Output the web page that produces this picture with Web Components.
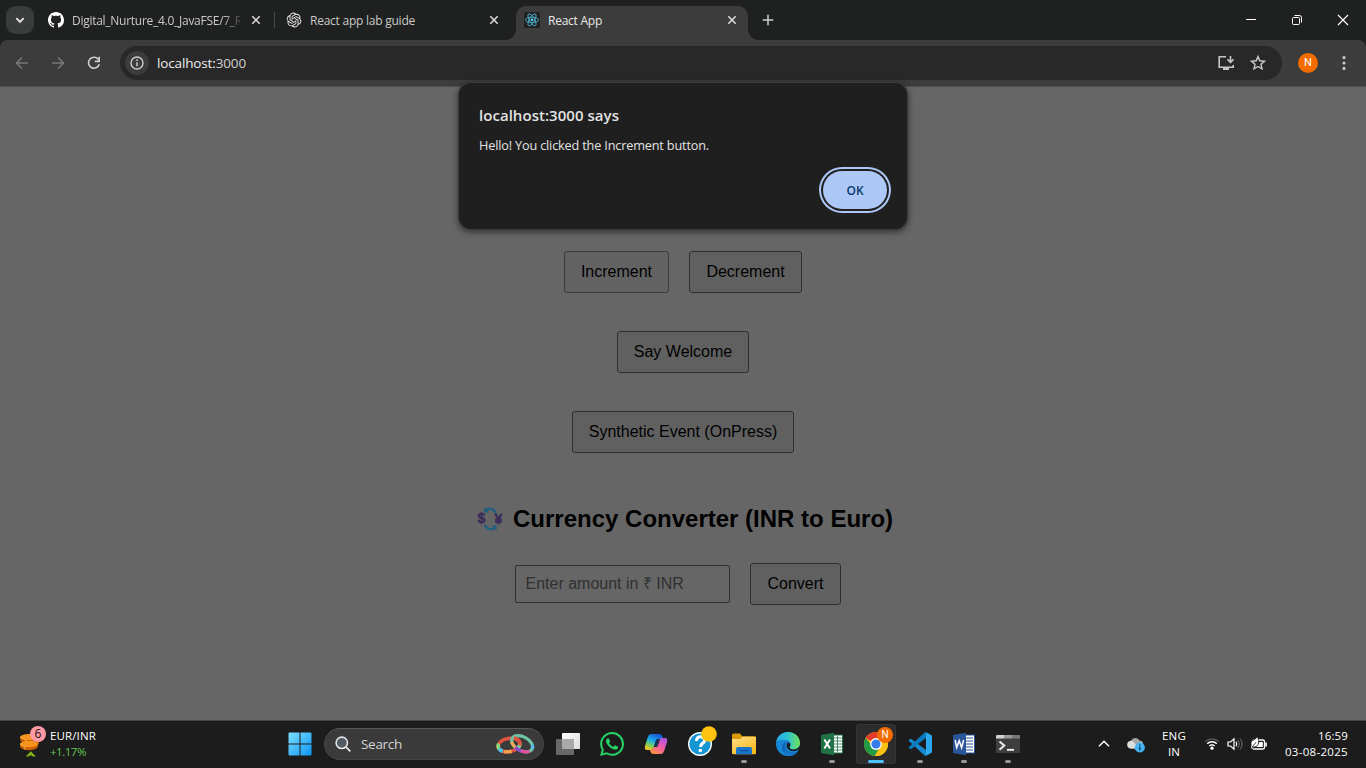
<!DOCTYPE html>
<html lang="en">
<head>
<meta charset="utf-8">
<title>React App</title>
<style>
html,body{margin:0;height:100%;overflow:hidden;background:#666}
body{font-family:"Open Sans","Noto Sans",sans-serif}
</style>
</head>
<body>
<desktop-screen></desktop-screen>
<script>
const ICONS = {
 chevronDown:['0 0 16 16','<path d="M4.3 6.2 8 9.9l3.7-3.7" fill="none" stroke="#e3e3e3" stroke-width="1.9"/>'],
 github:['0 0 16 16','<path fill="#fff" d="M8 0C3.58 0 0 3.58 0 8c0 3.54 2.29 6.53 5.47 7.59.4.07.55-.17.55-.38 0-.19-.01-.82-.01-1.49-2.01.37-2.53-.49-2.69-.94-.09-.23-.48-.94-.82-1.13-.28-.15-.68-.52-.01-.53.63-.01 1.08.58 1.23.82.72 1.21 1.87.87 2.33.66.07-.52.28-.87.51-1.07-1.78-.2-3.64-.89-3.64-3.95 0-.87.31-1.59.82-2.15-.08-.2-.36-1.02.08-2.12 0 0 .67-.21 2.2.82.64-.18 1.32-.27 2-.27s1.36.09 2 .27c1.53-1.04 2.2-.82 2.2-.82.44 1.1.16 1.92.08 2.12.51.56.82 1.27.82 2.15 0 3.07-1.87 3.75-3.65 3.95.29.25.54.73.54 1.48 0 1.07-.01 1.93-.01 2.2 0 .21.15.46.55.38A8.01 8.01 0 0 0 16 8c0-4.42-3.58-8-8-8z"/>'],
 openai:['-1 -1 26 26','<path fill="#f0f0f0" d="M22.28 9.82a5.98 5.98 0 0 0-.52-4.91 6.05 6.05 0 0 0-6.51-2.9A6.07 6.07 0 0 0 4.98 4.18a5.98 5.98 0 0 0-4 2.9 6.05 6.05 0 0 0 .74 7.1 5.98 5.98 0 0 0 .51 4.91 6.05 6.05 0 0 0 6.51 2.9A5.98 5.98 0 0 0 13.26 24a6.06 6.06 0 0 0 5.77-4.21 5.99 5.99 0 0 0 4-2.9 6.06 6.06 0 0 0-.75-7.07zm-9.02 12.61a4.48 4.48 0 0 1-2.88-1.04l.14-.08 4.78-2.76a.8.8 0 0 0 .39-.68v-6.74l2.02 1.17a.07.07 0 0 1 .04.05v5.58a4.5 4.5 0 0 1-4.49 4.5zM3.6 18.3a4.47 4.47 0 0 1-.54-3.01l.14.09 4.78 2.76a.77.77 0 0 0 .78 0l5.85-3.37v2.33a.08.08 0 0 1-.04.06L9.74 19.95A4.5 4.5 0 0 1 3.6 18.3zM2.34 7.9a4.49 4.49 0 0 1 2.37-1.98v5.68a.77.77 0 0 0 .38.68l5.82 3.35-2.02 1.17a.08.08 0 0 1-.07 0l-4.83-2.79A4.5 4.5 0 0 1 2.34 7.9zm16.6 3.85-5.84-3.39 2.02-1.16a.08.08 0 0 1 .07 0l4.83 2.79a4.49 4.49 0 0 1-.68 8.1v-5.67a.79.79 0 0 0-.4-.67zm2.01-3.02-.14-.09-4.78-2.78a.78.78 0 0 0-.78 0L9.41 9.23V6.9a.07.07 0 0 1 .03-.06l4.83-2.79a4.5 4.5 0 0 1 6.68 4.66zM8.31 12.86l-2.02-1.16a.08.08 0 0 1-.04-.06V6.07a4.5 4.5 0 0 1 7.38-3.45l-.15.08L8.7 5.46a.8.8 0 0 0-.39.68zm1.1-2.36 2.6-1.5 2.6 1.5v3l-2.6 1.5-2.6-1.5z"/>'],
 react:['0 0 16 16','<rect width="16" height="16" rx="1.5" fill="#202124"/><g fill="none" stroke="#4fb9d3" stroke-width=".85"><ellipse cx="8" cy="7.8" rx="6.7" ry="2.6"/><ellipse cx="8" cy="7.8" rx="6.7" ry="2.6" transform="rotate(60 8 7.8)"/><ellipse cx="8" cy="7.8" rx="6.7" ry="2.6" transform="rotate(120 8 7.8)"/></g><circle cx="8" cy="7.8" r="1.3" fill="#61dafb"/>'],
 close:['0 0 16 16','<path d="m4.3 4.3 7.4 7.4m0-7.4-7.4 7.4" stroke="#dcdcdc" stroke-width="1.55"/>'],
 plus:['0 0 16 16','<path d="M8 2.7v10.6M2.7 8h10.6" stroke="#d0d0d0" stroke-width="1.5"/>'],
 minimize:['0 0 16 16','<path d="M3 7.5h10" stroke="#fff"/>'],
 restore:['0 0 16 16','<g fill="none" stroke="#fff"><rect x="3.5" y="5.5" width="7" height="7" rx="1"/><path d="M5.5 3.5h5a2 2 0 0 1 2 2v5"/></g>'],
 winclose:['0 0 16 16','<path d="m3 3 10 10M13 3 3 13" stroke="#fff" stroke-width="1.2"/>'],
 back:['0 0 16 16','<path d="M14 8H2.8M8 2.5 2.5 8 8 13.5" fill="none" stroke="#787878" stroke-width="1.6"/>'],
 forward:['0 0 16 16','<path d="M2 8h11.2M8 2.5 13.5 8 8 13.5" fill="none" stroke="#787878" stroke-width="1.6"/>'],
 reload:['0 0 16 16','<path d="M12.6 4.7A5.5 5.5 0 1 0 13.3 9.3" fill="none" stroke="#d0d0d0" stroke-width="1.6"/><path d="M13.2 1.8v4.6H8.8" fill="none" stroke="#d0d0d0" stroke-width="1.6"/>'],
 info:['0 0 16 16','<circle cx="8" cy="8" r="6" fill="none" stroke="#ccc" stroke-width="1.4"/><path d="M8 7.2v4M8 4.3v1.6" stroke="#ccc" stroke-width="1.5"/>'],
 install:['0 0 18 18','<path d="M9 2.8H2.2v10.4h14V11" fill="none" stroke="#c7c7c7" stroke-width="1.6"/><path d="M6 13h6v3H6z" fill="#c7c7c7"/><path d="M13.5 2v6m-3-2.6 3 3 3-3" fill="none" stroke="#c7c7c7" stroke-width="1.6"/>'],
 star:['0 0 16 16','<path d="m8 1.6 1.8 4.2 4.7.4-3.5 3.1 1 4.6L8 11.5l-4 2.4 1-4.6-3.5-3.1 4.7-.4z" fill="none" stroke="#ccc" stroke-width="1.4"/>'],
 dots:['0 0 16 16','<g fill="#c7c7c7"><circle cx="8" cy="2.6" r="1.6"/><circle cx="8" cy="8" r="1.6"/><circle cx="8" cy="13.4" r="1.6"/></g>'],
 exchange:['0 0 25 25','<g fill="none" stroke="#1f5f80" stroke-width="2.6"><path d="M8 2.6c4-1.6 8-.3 9.8 3.4M16.6 21.4c-4 1.6-8 .3-9.8-3.4"/></g><path d="M6 .4v5.2h5.2zM18.6 23.6v-5.2h-5.2z" fill="#1f5f80"/><g fill="#3a2a58" font-family="Liberation Sans" font-size="14" stroke="#3a2a58" stroke-width=".5"><text x="-.6" y="16">$</text><text x="16.6" y="17">¥</text></g>'],
 coins:['0 0 28 32','<g fill="#c85f08"><ellipse cx="10" cy="11.5" rx="9" ry="4"/><ellipse cx="13" cy="15" rx="7" ry="3.5"/><ellipse cx="10" cy="18" rx="9" ry="4.3"/></g><g fill="#f6941e"><ellipse cx="10" cy="9" rx="9" ry="3"/><ellipse cx="10" cy="16" rx="9" ry="3.2"/></g><path d="m1 16 5 2.7v3M1 9l6 3v2" stroke="#ffb23c" fill="none"/><path d="m6.8 28.5 5-5.3 5 5.3h-3l-2-1.6-2 1.6z" fill="#83b818"/>'],
 windows:['0 0 24 24','<defs><linearGradient id="w" gradientUnits="userSpaceOnUse" x2="24" y2="24"><stop stop-color="#83e1ff"/><stop offset="1" stop-color="#0793f4"/></linearGradient></defs><path fill="url(#w)" d="M.5 1.5q0-1 1-1h10v11H.5zM12.5.5h10q1 0 1 1v10h-11zM.5 12.5h11v11h-10q-1 0-1-1zM12.5 12.5h11v10q0 1-1 1h-10z"/>'],
 search:['0 0 16 16','<circle cx="6.8" cy="6.8" r="5.7" fill="#525b64" stroke="#e5e5e5" stroke-width="1.6"/><path d="m10.9 10.9 4.4 4.4" stroke="#e5e5e5" stroke-width="1.8"/>'],
 rings:['0 0 38 22','<g fill="none" stroke-width="3.6"><g transform="rotate(-10 13 12)"><ellipse cx="13" cy="12" rx="11" ry="6.6" stroke="#e0523f"/><ellipse cx="13" cy="12" rx="11" ry="6.6" stroke="#f2a04b" pathLength="100" stroke-dasharray="14 86" stroke-dashoffset="-22"/><ellipse cx="13" cy="12" rx="11" ry="6.6" stroke="#3fc7e6" pathLength="100" stroke-dasharray="9 91" stroke-dashoffset="-38"/><ellipse cx="13" cy="12" rx="11" ry="6.6" stroke="#8fdc7c" pathLength="100" stroke-dasharray="9 91" stroke-dashoffset="-47"/><ellipse cx="13" cy="12" rx="11" ry="6.6" stroke="#75d69b" pathLength="100" stroke-dasharray="12 88"/></g><g transform="rotate(28 26 11)" stroke-width="3.2"><ellipse cx="26" cy="10.7" rx="11.3" ry="7" stroke="#6fc3a2"/><ellipse cx="26" cy="10.7" rx="11.3" ry="7" stroke="#e44fa4" pathLength="100" stroke-dasharray="15 85" stroke-dashoffset="-6"/><ellipse cx="26" cy="10.7" rx="11.3" ry="7" stroke="#9042ce" pathLength="100" stroke-dasharray="12 88" stroke-dashoffset="-21"/><ellipse cx="26" cy="10.7" rx="11.3" ry="7" stroke="#f0a850" pathLength="100" stroke-dasharray="11 89" stroke-dashoffset="-33"/><ellipse cx="26" cy="10.7" rx="11.3" ry="7" stroke="#57b8e8" pathLength="100" stroke-dasharray="8 92" stroke-dashoffset="-92"/></g><path d="M18 4.5q7 2 6 8" stroke="#e2503f" stroke-width="3"/></g>'],
 taskview:['0 0 24 24','<defs><linearGradient id="tv" x2="1" y2="1"><stop stop-color="#fff"/><stop offset="1" stop-color="#ddd"/></linearGradient></defs><rect x="6" y="1" width="18" height="16" rx=".7" fill="url(#tv)"/><rect y="7" width="18" height="16" rx=".7" fill="#686868"/><path d="M6 7h12v10H6z" fill="#aaa"/>'],
 whatsapp:['0 0 24 24','<path fill="#25d366" d="M17.47 14.38c-.3-.15-1.76-.87-2.03-.97-.27-.1-.47-.15-.67.15-.2.3-.77.97-.94 1.16-.17.2-.35.22-.64.08-.3-.15-1.26-.46-2.39-1.48-.88-.79-1.48-1.76-1.65-2.06-.17-.3-.02-.46.13-.61.13-.13.3-.35.44-.52.15-.17.2-.3.3-.5.1-.2.05-.37-.02-.52-.08-.15-.67-1.61-.92-2.21-.24-.58-.49-.5-.67-.51h-.57c-.2 0-.52.07-.79.37-.27.3-1.04 1.02-1.04 2.48s1.07 2.88 1.21 3.07c.15.2 2.1 3.2 5.08 4.49.71.31 1.26.49 1.69.62.71.23 1.36.2 1.87.12.57-.09 1.76-.72 2.01-1.41.25-.69.25-1.29.17-1.41-.07-.12-.27-.2-.57-.34M12.05 21.79a9.87 9.87 0 0 1-5.03-1.38l-.36-.21-3.74.98 1-3.65-.24-.37a9.86 9.86 0 0 1-1.51-5.26c0-5.45 4.44-9.89 9.89-9.89a9.88 9.88 0 0 1 9.88 9.9c0 5.45-4.44 9.88-9.89 9.88m8.42-18.3A11.82 11.82 0 0 0 12.05 0C5.5 0 .16 5.34.16 11.89c0 2.1.55 4.14 1.59 5.95L.06 24l6.31-1.65a11.88 11.88 0 0 0 5.68 1.45c6.56 0 11.9-5.34 11.9-11.9 0-3.17-1.24-6.16-3.48-8.41z"/>'],
 copilot:['0 0 24 24','<defs><linearGradient id="c1" x1=".7" x2=".2" y2="1"><stop stop-color="#1755d5"/><stop offset=".45" stop-color="#1aabe9"/><stop offset=".72" stop-color="#79ce5c"/><stop offset="1" stop-color="#ffc31b"/></linearGradient><linearGradient id="c2" x1=".8" x2=".2" y2="1"><stop stop-color="#a756e8"/><stop offset=".5" stop-color="#f65aa1"/><stop offset="1" stop-color="#ff963e"/></linearGradient></defs><path fill="url(#c1)" d="M7 2h8.5q2 0 2.7 2l.8 3H14q-1.5 0-2.2 2L10 15q-1 3-3.5 3H3.3Q0 18 1 14L3.8 5Q4.7 2 7 2z"/><path fill="url(#c2)" d="M17.5 6H21q3 0 2.1 4l-3 9q-1 3-3.6 3H10q-3 0-3.5-2.3L6 18q2.8 0 3.8-3H12q1.2 0 1.8-1.7L15.5 8q.6-2 2-2z"/><path fill="#1b3156" d="m10 15 1.8-6q.6-2 2.2-2h2l-2 6q-.7 2-2 2z"/>'],
 help:['0 0 30 30','<circle cx="12" cy="18" r="12" fill="#fff"/><circle cx="12" cy="18" r="10.6" fill="#1496d3"/><path d="M8.3 15q.4-4.2 4.2-4.2 4.1 0 4.1 3.3 0 2.1-2 3.3-2 1.2-2 3.5" fill="none" stroke="#fff" stroke-width="3"/><circle cx="12.3" cy="24.5" r="1.8" fill="#fff"/><circle cx="21" cy="8" r="7.8" fill="#ffc20e"/>'],
 folder:['0 0 24 24','<defs><linearGradient id="f" y2="1" x2=".7"><stop stop-color="#ffe08a"/><stop offset="1" stop-color="#f7b91d"/></linearGradient></defs><path d="M0 3q0-1.5 1.5-1.5H8l2.2 2.7H22q2 0 2 2V15H0z" fill="#d99b0b"/><path d="M0 7h8.5l2.2-2.3H24v16q0 1.5-1.5 1.5h-21Q0 22.2 0 20.7z" fill="url(#f)"/><path d="M4 22.2v-5Q4 15 6 15h12q2 0 2 2.2v5z" fill="#1975cb"/><path d="M8 18h8v1.2H8z" fill="#0c4f9f"/>'],
 edge:['0 0 24 24','<defs><linearGradient id="e1" x1="0" x2="1"><stop stop-color="#29a9e8"/><stop offset=".45" stop-color="#2bc3d2"/><stop offset="1" stop-color="#72e15b"/></linearGradient><linearGradient id="e2" x2="0" y2="1"><stop stop-color="#0c59a4"/><stop offset="1" stop-color="#167bd4"/></linearGradient></defs><circle cx="12" cy="12" r="12" fill="#1686d5"/><path d="M.2 10C1.5 3.8 6.2 0 12 0c7.2 0 12 5.3 12 11 0 4.3-3.2 6.5-6.2 6.5-3.3 0-5.2-1.4-3.7-3.5 1.3-2 .6-5.5-4-6C6 7.5 2 8 .2 10z" fill="url(#e1)"/><path d="M9 10.2C3.5 14 6 22.5 12.2 24c4 .5 8.2-2 10.2-5.5-6 3.7-13.2.7-13.4-4.6-.1-1.6.5-2.8 1.4-3.8z" fill="url(#e2)"/><path d="M11.8 10.5c-2.6 2.2-.8 8 4.4 8.6 2.8.3 5-.6 6.3-1.5l2 .5v-6c-.8 3.6-3.7 5.4-6.7 5.4-3.3 0-5.2-1.4-3.7-3.5.8-1.4-.3-3.5-2.3-3.5z" fill="#1c1c1c"/>'],
 excel:['0 0 24 24','<path d="M12 3h10.5v18H12z" fill="#fff" stroke="#207245"/><path d="M13 6h9M13 9h9M13 12h9M13 15h9M13 18h9M17.5 4v16" stroke="#207245" stroke-width=".8"/><path d="M1 3 14 .7v22.6L1 21z" fill="#1f7244"/><path d="m4.4 7.5 5.6 9m0-9-5.6 9" stroke="#fff" stroke-width="2"/>'],
 word:['0 0 24 24','<path d="M12 3h10.5v18H12z" fill="#fff" stroke="#2b579a"/><path d="M14 6h7M14 9h7M14 12h7M14 15h7M14 18h7" stroke="#2b579a" stroke-width="1.1"/><path d="M1 3 14 .7v22.6L1 21z" fill="#2b579a"/><path d="m3.2 8 1.5 7.6L7.2 8.8l2.4 6.8L11.6 8" fill="none" stroke="#fff" stroke-width="1.5"/>'],
 chrome:['0 0 24 24','<circle cx="12" cy="12" r="12" fill="#fbc116"/><path d="M12 12 1.6 6A12 12 0 0 1 22.4 6z" fill="#e33b2e"/><path d="M1.6 6a12 12 0 0 0 9.2 18l6-10.4-9.6-1z" fill="#229b48"/><path d="M12 6h10.4a12 12 0 0 1-11.6 18l6.2-10z" fill="#fbc116"/><circle cx="12" cy="12" r="5.9" fill="#fff"/><circle cx="12" cy="12" r="4.6" fill="#367ce9"/>'],
 vscode:['0 0 24 24','<path d="m.4 8.6 1.4-1.4q.7-.7 1.5-.1L18 18v6q-.8 0-1.4-.6z" fill="#1689cf"/><path d="m.4 15.4 1.4 1.4q.7.7 1.5.1L18 6V0q-.8 0-1.4.6z" fill="#0b79be"/><path d="m17.3 0 5.5 2.7Q24 3.3 24 4.5v15q0 1.2-1.2 1.8L17.3 24q.7-.4.7-1.4V1.4q0-1-.7-1.4z" fill="#2ba9ef"/>'],
 terminal:['0 0 24 24','<rect y="3" width="24" height="18" rx="1.2" fill="#3e3e3e"/><path d="M0 6.5V4.2Q0 3 1.2 3H8v3.5z" fill="#d3d3d3"/><path d="M8 3h8v3.5H8z" fill="#9b9b9b"/><path d="M16 3h6.8Q24 3 24 4.2v2.3h-8z" fill="#777"/><path d="m3.5 9.5 4.7 4-4.7 4.2" fill="none" stroke="#e6e6e6" stroke-width="2.2"/><path d="M11 17.8h7" stroke="#fff" stroke-width="1.7"/>'],
 chevronUp:['0 0 16 16','<path d="m3 10.3 5-5 5 5" fill="none" stroke="#fff" stroke-width="1.5"/>'],
 cloud:['0 0 18 18','<path d="M4 13.5a3.8 3.8 0 0 1 0-7.5C5.5 2 11 2 12.5 5.5c4 0 4.5 4 3 8z" fill="#a6a6a6"/><path d="M4 13.5a3.8 3.8 0 1 1 3.5-5.3l5 5.3z" fill="#ddd"/><circle cx="12.8" cy="12.5" r="5.1" fill="#48b5f3"/><path d="M12.8 11.7v3.6m0-5.7v1.2" stroke="#073958" stroke-width="1.4"/>'],
 wifi:['0 0 16 16','<g fill="none" stroke="#fff" stroke-width="1.4"><path d="M3.2 7.8a6.8 6.8 0 0 1 9.6 0M5.3 10a3.9 3.9 0 0 1 5.4 0"/><path d="M1.2 5.8a9.6 9.6 0 0 1 13.6 0" stroke="#555"/></g><circle cx="8" cy="12.2" r="1.6" fill="#fff"/>'],
 sound:['0 0 18 16','<path d="M2 6h2.5L8 2.8v10.4L4.5 10H2z" fill="none" stroke="#fff" stroke-width="1.2"/><path d="M10 5.7q1.5 2.3 0 4.6" fill="none" stroke="#fff" stroke-width="1.2"/><path d="M12 4q3 4 0 8M14 2.3q4.3 5.7 0 11.4" fill="none" stroke="#707070"/>'],
 battery:['0 0 18 16','<rect x="2.5" y="4" width="12" height="9" rx="1.5" fill="none" stroke="#fff" stroke-width="1.3"/><path d="M15.3 6.5h1.6v4h-1.6z" fill="#fff"/><path d="M9.5 6h3.3v5H6.5z" fill="#fff"/><path d="M1.3 9.5Q0 4.5 4 4L7.5.8Q9.7 5 8.3 8.2 7 11.5 3.2 11L1.2 13.5" fill="#fff" stroke="#1c1c1c" stroke-width=".8"/><path d="m2.2 11 4-5" stroke="#1c1c1c" stroke-width=".8"/>'],
};
const define = (tag, html, setup) => {
  const t = document.createElement('template');
  t.innerHTML = html;
  customElements.define(tag, class extends HTMLElement {
    connectedCallback() {
      if (this.shadowRoot) return;
      this.attachShadow({mode:'open'}).append(t.content.cloneNode(true));
      if (setup) setup(this, this.shadowRoot);
    }
  });
};
define('app-icon','<style>:host{display:block;flex:none}svg{display:block;overflow:visible}</style><svg></svg>',(el,r)=>{
  const [vb,body]=ICONS[el.getAttribute('name')], s=r.querySelector('svg');
  const w=el.getAttribute('w')||16;
  s.setAttribute('viewBox',vb); s.setAttribute('width',w); s.setAttribute('height',el.getAttribute('h')||w); s.innerHTML=body;
});
/* A one-line label whose tracking is tuned to a given width. */
define('fit-label','<style>:host{display:block;flex:none;white-space:nowrap}span{display:inline-block}</style><span><slot></slot></span>',(el,r)=>{
  const s=r.querySelector('span'), w=+el.getAttribute('w'), n=el.textContent.length;
  if(w) s.style.letterSpacing=((w-s.getBoundingClientRect().width)/n)+'px';
});
define('browser-tab',`<style>
:host{display:flex;align-items:center;box-sizing:border-box;width:238px;height:34px;padding:0 12px 6px 10px;font-size:12px;line-height:18px;color:#c9cac9;flex:none;position:relative}
:host([active]){width:232px;margin:0 2px;padding:0 8px 6px;background:#3c3c3c;border-radius:10px 10px 0 0;color:#e8e8e8}
:host([active])::before,:host([active])::after{content:"";position:absolute;bottom:0;width:10px;height:10px}
:host([active])::before{left:-10px;background:radial-gradient(circle at 0 0,transparent 9.5px,#3c3c3c 10px)}
:host([active])::after{right:-10px;background:radial-gradient(circle at 100% 0,transparent 9.5px,#3c3c3c 10px)}
.t{flex:1;overflow:hidden;margin:0 8px;padding-top:2px}
:host([fade]) .t{-webkit-mask:linear-gradient(90deg,#000 150px,transparent 172px)}
.d{display:none;width:1px;height:16px;background:#484949;margin-right:-11px;margin-left:10px}
:host([divided]) .d{display:block}
</style><slot name="icon"></slot><div class="t"><slot></slot></div><app-icon name="close"></app-icon><i class="d"></i>`);
define('window-frame',`<style>
:host{display:flex;height:40px;box-sizing:border-box;padding-top:6px;background:#1f2120}
.s{width:28px;height:28px;border-radius:9px;background:#3a3b3b;margin:0 4px 0 6px;display:grid;place-items:center}
.p{margin:6px 0 0 10px}.w{margin-left:auto;display:flex;height:28px}.w app-icon{width:46px;display:grid;place-items:center}
</style><div class="s"><app-icon name="chevronDown"></app-icon></div>
<browser-tab fade divided><app-icon slot="icon" name="github"></app-icon><fit-label w="170">Digital_Nurture_4.0_JavaFSE/7_R</fit-label></browser-tab>
<browser-tab><app-icon slot="icon" name="openai"></app-icon><fit-label w="105">React app lab guide</fit-label></browser-tab>
<browser-tab active><app-icon slot="icon" name="react"></app-icon><fit-label w="54">React App</fit-label></browser-tab>
<app-icon class="p" name="plus"></app-icon>
<div class="w"><app-icon name="minimize"></app-icon><app-icon name="restore"></app-icon><app-icon name="winclose"></app-icon></div>`);
define('address-bar',`<style>
:host{display:block;background:#1f2120;height:47px}
.b{display:flex;align-items:center;height:47px;box-sizing:border-box;padding:0 14px;background:#3c3c3c;border-radius:8px 8px 0 0;border-bottom:1px solid #505050}
.o{display:flex;align-items:center;box-sizing:border-box;width:1162px;height:34px;border-radius:17px;background:#282828;padding:0 16px 0 5px;margin-left:18px}
.i{width:24px;height:24px;border-radius:50%;background:#3c3c3c;display:grid;place-items:center;margin-right:8px}
.n{display:flex;gap:20px}.u{font-size:13.5px;line-height:20px;color:#d0d0d0}b{font-weight:400;color:#eee}
.x{margin-left:auto;margin-right:15px}
.a{width:20px;height:20px;border-radius:50%;background:#f26c00;color:#fff;font:11px/20px Roboto,sans-serif;text-align:center;margin:0 18px 0 16px}
</style><div class="b"><div class="n"><app-icon name="back"></app-icon><app-icon name="forward"></app-icon><app-icon name="reload"></app-icon></div>
<div class="o"><div class="i"><app-icon name="info"></app-icon></div><fit-label class="u" w="89"><b>localhost:</b>3000</fit-label><app-icon class="x" name="install" w="18"></app-icon><app-icon name="star"></app-icon></div>
<div class="a">N</div><app-icon name="dots"></app-icon></div>`);
define('page-button',`<style>:host{display:block}button{display:block;font:16px "Liberation Sans",sans-serif;width:var(--w);height:42px;padding:0;margin:0;background:#606060;border:1px solid #2f2f2f;border-radius:3px;color:#000;white-space:nowrap}
:host([hot]) button{border-color:#3b3b3b;background:#626262}</style><button><slot></slot></button>`);
define('web-page',`<style>
:host{display:flex;flex-direction:column;align-items:center;height:633px;box-sizing:border-box;padding-top:164px;background:#666;font-family:"Liberation Sans",sans-serif;color:#000}
.r{display:flex;gap:20px;height:42px;margin-bottom:38px;align-items:center}
h2{font-size:24px;line-height:28px;margin:14px 0 30px;display:flex;align-items:center;gap:10px;width:410px;white-space:nowrap}
input{box-sizing:border-box;width:215px;height:38px;padding:0 9.5px;border:1px solid #2f2f2f;border-radius:2px;background:#666;font:16px "Liberation Sans",sans-serif;margin:0}
input::placeholder{color:#303030;opacity:1}.c{margin-right:10px;margin-bottom:0}
</style>
<div class="r"><page-button hot style="--w:105px">Increment</page-button><page-button style="--w:113px">Decrement</page-button></div>
<div class="r"><page-button style="--w:132px">Say Welcome</page-button></div>
<div class="r"><page-button style="--w:222px">Synthetic Event (OnPress)</page-button></div>
<h2><app-icon name="exchange" w="25"></app-icon><span>Currency Converter (INR to Euro)</span></h2>
<div class="r c"><input placeholder="Enter amount in ₹ INR"><page-button style="--w:91px">Convert</page-button></div>`);
define('alert-dialog',`<style>
:host{display:block;position:absolute;left:459px;top:83px;box-sizing:border-box;width:448px;height:146px;padding:21px 18px 17px 20px;background:#1f1f1f;border-radius:12px;box-shadow:0 0 0 1px #3b3b3b,0 2px 6px 1px #0008;color:#e3e3e3}
.h{font-size:15px;font-weight:600;line-height:22px}.m{font-size:12.7px;line-height:20px;margin-top:9px}
button{display:block;width:64px;height:38px;margin:16px 2px 0 auto;border:0;border-radius:19px;background:#adc8f7;box-shadow:0 0 0 2px #1f1f1f,0 0 0 4px #adc8f7;color:#0a3a6e;font:600 12px "Open Sans",sans-serif;padding:0}
</style><fit-label class="h" w="140">localhost:3000 says</fit-label><fit-label class="m" w="230">Hello! You clicked the Increment button.</fit-label><button>OK</button>`);
define('task-item',`<style>
:host{display:grid;place-items:center;position:relative;width:40px;height:40px;margin:0 2px;border-radius:4px;box-sizing:border-box;flex:none}
:host([active]){background:#2c2c2c;box-shadow:inset 0 0 0 1px #353535}
i{display:none;position:absolute;left:17px;bottom:1px;width:6px;height:3px;border-radius:2px;background:#999}
:host([open]) i,:host([active]) i{display:block}:host([active]) i{left:12px;width:16px;background:#4cc2ff}
::slotted(.badge){position:absolute;left:21px;top:3px;width:16px;height:16px;border-radius:50%;background:#f26c00;color:#fff;font:10px/16px Roboto,sans-serif;text-align:center}
::slotted(.up){margin:-6px 0 0 6px}
</style><slot></slot><i></i>`);
define('task-bar',`<style>
:host{display:flex;align-items:center;box-sizing:border-box;height:48px;border-top:1px solid #454545;padding-bottom:1px;background:#1c1c1c;color:#fff;font-size:11.5px;line-height:16px}
.wd{display:flex;width:287.5px;padding-left:19px;box-sizing:border-box;gap:3px}
.co{position:relative;width:28px}.bd{position:absolute;left:11px;top:-2px;width:16px;height:16px;border-radius:50%;background:#ff99a4;color:#111;font-size:12px;text-align:center}
.g{color:#62c554}
.s{display:flex;align-items:center;box-sizing:border-box;width:220px;height:32px;border-radius:16px;background:#3a3a3a;border:1px solid #454545;border-top-color:#575757;margin:0 2px 0 12.5px;padding:0 9px 0 10px;font-size:13.5px;color:#d5d5d5}
.s fit-label{margin:0 auto 0 10px}
.tr{margin-left:auto;display:flex;align-items:center;padding-right:18px}
.l{text-align:center;margin:0 18px 0 17px;width:24px}.dt{text-align:right;margin-left:17px;width:63px}.dt fit-label{display:flex;justify-content:flex-end}
.l fit-label{display:flex;justify-content:center}
</style>
<div class="wd"><div class="co"><app-icon name="coins" w="28" h="32"></app-icon><span class="bd">6</span></div><div><fit-label w="46">EUR/INR</fit-label><fit-label class="g" w="36">+1.17%</fit-label></div></div>
<app-icon name="windows" w="24"></app-icon>
<div class="s"><app-icon name="search"></app-icon><fit-label w="41">Search</fit-label><app-icon name="rings" w="38" h="22"></app-icon></div>
<task-item><app-icon name="taskview" w="24"></app-icon></task-item>
<task-item><app-icon name="whatsapp" w="24"></app-icon></task-item>
<task-item><app-icon name="copilot" w="24"></app-icon></task-item>
<task-item><app-icon class="up" name="help" w="30"></app-icon></task-item>
<task-item open><app-icon name="folder" w="24"></app-icon></task-item>
<task-item><app-icon name="edge" w="24"></app-icon></task-item>
<task-item open><app-icon name="excel" w="24"></app-icon></task-item>
<task-item active><app-icon name="chrome" w="24"></app-icon><span class="badge">N</span></task-item>
<task-item open><app-icon name="vscode" w="24"></app-icon></task-item>
<task-item open><app-icon name="word" w="24"></app-icon></task-item>
<task-item open><app-icon name="terminal" w="24"></app-icon></task-item>
<div class="tr"><app-icon name="chevronUp"></app-icon><app-icon name="cloud" w="18" style="margin-left:15px"></app-icon>
<div class="l"><fit-label w="24">ENG</fit-label><fit-label w="12">IN</fit-label></div>
<app-icon name="wifi"></app-icon><app-icon name="sound" w="18" h="16" style="margin:0 6px"></app-icon><app-icon name="battery" w="18" h="16"></app-icon>
<div class="dt"><fit-label w="30">16:59</fit-label><fit-label w="63">03-08-2025</fit-label></div></div>`);
define('desktop-screen',`<style>:host{display:flex;flex-direction:column;position:relative;width:1366px;height:768px;overflow:hidden}</style>
<window-frame></window-frame><address-bar></address-bar><web-page></web-page><task-bar></task-bar><alert-dialog></alert-dialog>`);
</script>
</body>
</html>
